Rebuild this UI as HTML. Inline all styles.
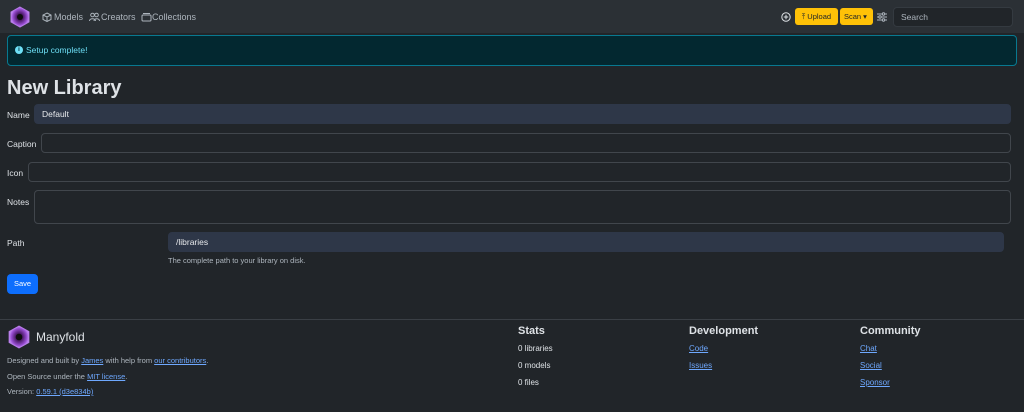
<!DOCTYPE html>
<html><head><meta charset="utf-8"><style>
*{box-sizing:border-box;margin:0;padding:0}
body{width:1024px;height:412px;overflow:hidden;background:#212529;color:#dee2e6;font-family:"Liberation Sans",sans-serif;font-size:8.5px;position:relative}
.a{position:absolute}
.nav{left:0;top:0;width:1024px;height:33px;background:#2b3035}
.in{position:absolute;border:1px solid #41464c;border-radius:4px;background:#212529}
.fill{background:#2e3748;border-color:#2e3748;color:#e8eaed;padding-left:7px;line-height:18px;font-size:8.5px}
.lbl{position:absolute;left:7px;font-size:8.5px;color:#dee2e6}
a{color:#6ea8fe;text-decoration:underline}
.h{font-weight:bold;font-size:11px;color:#dee2e6}
</style></head><body>
<div class="a nav"></div>
<svg class="a" style="left:9px;top:6px" width="22" height="22" viewBox="0 0 22 22">
<defs><radialGradient id="g"><stop offset="0" stop-color="#111"/><stop offset=".35" stop-color="#4a1a66"/><stop offset=".8" stop-color="#9b4fd6"/><stop offset="1" stop-color="#c18cf0"/></radialGradient></defs>
<polygon points="11,1 20,6 20,16 11,21 2,16 2,6" fill="url(#g)" stroke="#b77ce8" stroke-width="1"/><circle cx="11" cy="11" r="3" fill="#0d0d0d"/></svg>
<svg class="a" style="left:42px;top:12px" width="10" height="10" viewBox="0 0 10 10" fill="none" stroke="#adb5bd" stroke-width="1"><polygon points="5,1 9,3 9,7.5 5,9.5 1,7.5 1,3"/><path d="M1,3 5,5 9,3 M5,5V9.5"/></svg>
<div class="a" style="left:54px;top:12px;color:#adb5bd;font-size:9px">Models</div>
<svg class="a" style="left:89px;top:12px" width="11" height="10" viewBox="0 0 11 10" fill="none" stroke="#adb5bd" stroke-width="1"><circle cx="3.5" cy="3" r="1.8"/><circle cx="7.5" cy="3" r="1.8"/><path d="M0.5,9c0-3 6-3 6,0M5,9c0-3 5.5-3 5.5,0"/></svg>
<div class="a" style="left:101px;top:12px;color:#adb5bd;font-size:9px">Creators</div>
<svg class="a" style="left:141px;top:12px" width="11" height="10" viewBox="0 0 11 10" fill="none" stroke="#adb5bd" stroke-width="1"><rect x="1" y="3" width="9" height="6" rx="1"/><path d="M2,1.5h7"/></svg>
<div class="a" style="left:152px;top:12px;color:#adb5bd;font-size:9px">Collections</div>
<svg class="a" style="left:781px;top:12px" width="10" height="10" viewBox="0 0 10 10" fill="none" stroke="#dee2e6" stroke-width="1"><circle cx="5" cy="5" r="4.2"/><path d="M5,2.8v4.4M2.8,5h4.4"/></svg>
<div class="a" style="left:795px;top:8px;width:43px;height:17px;background:#ffc107;border-radius:3px;color:#212529;font-size:7.5px;line-height:17px;text-align:center">⤒ Upload</div>
<div class="a" style="left:840px;top:8px;width:33px;height:17px;background:#ffc107;border-radius:3px;color:#212529;font-size:7.5px;line-height:17px;padding-left:4px">Scan ▾</div>
<svg class="a" style="left:877px;top:12px" width="10" height="10" viewBox="0 0 10 10" stroke="#adb5bd" stroke-width="1"><path d="M0,2h10M0,5h10M0,8h10"/><circle cx="6.5" cy="2" r="1.2" fill="#2b3035"/><circle cx="3" cy="5" r="1.2" fill="#2b3035"/><circle cx="6.5" cy="8" r="1.2" fill="#2b3035"/></svg>
<div class="a" style="left:893px;top:7px;width:120px;height:20px;background:#212529;border:1px solid #343a40;border-radius:4px;color:#adb5bd;font-size:8.5px;line-height:18px;padding-left:7px">Search</div>
<div class="a" style="left:7px;top:35px;width:1010px;height:31px;background:#032830;border:1px solid #087990;border-radius:4px"></div>
<div class="a" style="left:15px;top:46px;width:8px;height:8px;border-radius:50%;background:#6edff6;color:#032830;font-size:6px;line-height:8px;text-align:center;font-weight:bold">i</div>
<div class="a" style="left:26px;top:45px;color:#6edff6;font-size:8.5px">Setup complete!</div>
<div class="a" style="left:7px;top:77px;font-size:20px;font-weight:bold;color:#dee2e6">New Library</div>
<div class="lbl" style="top:110px">Name</div>
<div class="in fill" style="left:34px;top:104px;width:977px;height:20px">Default</div>
<div class="lbl" style="top:139px">Caption</div>
<div class="in" style="left:41px;top:133px;width:970px;height:20px"></div>
<div class="lbl" style="top:168px">Icon</div>
<div class="in" style="left:28px;top:162px;width:983px;height:20px"></div>
<div class="lbl" style="top:197px">Notes</div>
<div class="in" style="left:34px;top:190px;width:977px;height:34px"></div>
<div class="lbl" style="top:238px">Path</div>
<div class="in fill" style="left:168px;top:232px;width:836px;height:20px">/libraries</div>
<div class="a" style="left:168px;top:256px;color:#adb5bd;font-size:7.5px">The complete path to your library on disk.</div>
<div class="a" style="left:7px;top:274px;width:31px;height:20px;background:#0d6efd;border-radius:4px;color:#fff;font-size:7.5px;line-height:20px;text-align:center">Save</div>
<div class="a" style="left:0;top:319px;width:1024px;height:1px;background:#3a3f45"></div>
<svg class="a" style="left:7px;top:325px" width="24" height="24" viewBox="0 0 22 22"><polygon points="11,1 20,6 20,16 11,21 2,16 2,6" fill="url(#g)" stroke="#b77ce8" stroke-width="1"/><circle cx="11" cy="11" r="3" fill="#0d0d0d"/></svg>
<div class="a" style="left:36px;top:330px;font-size:12px;color:#dee2e6">Manyfold</div>
<div class="a" style="left:7px;top:356px;font-size:7.5px;color:#adb5bd">Designed and built by <a>James</a> with help from <a>our contributors</a>.</div>
<div class="a" style="left:7px;top:372px;font-size:7.5px;color:#adb5bd">Open Source under the <a>MIT license</a>.</div>
<div class="a" style="left:7px;top:387px;font-size:7.5px;color:#adb5bd">Version: <a>0.59.1 (d3e834b)</a></div>
<div class="a h" style="left:518px;top:325px">Stats</div>
<div class="a" style="left:518px;top:344px;font-size:8px">0 libraries</div>
<div class="a" style="left:518px;top:361px;font-size:8px">0 models</div>
<div class="a" style="left:518px;top:378px;font-size:8px">0 files</div>
<div class="a h" style="left:689px;top:325px">Development</div>
<div class="a" style="left:689px;top:344px;font-size:8px"><a>Code</a></div>
<div class="a" style="left:689px;top:361px;font-size:8px"><a>Issues</a></div>
<div class="a h" style="left:860px;top:325px">Community</div>
<div class="a" style="left:860px;top:344px;font-size:8px"><a>Chat</a></div>
<div class="a" style="left:860px;top:361px;font-size:8px"><a>Social</a></div>
<div class="a" style="left:860px;top:378px;font-size:8px"><a>Sponsor</a></div>
</body></html>
